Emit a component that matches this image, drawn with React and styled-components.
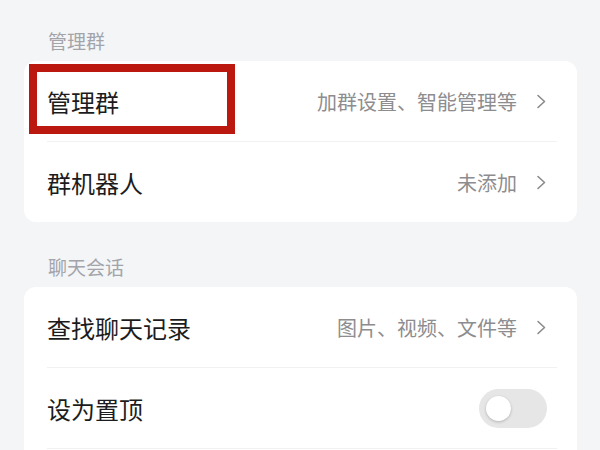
import React from "react";
import styled, { createGlobalStyle } from "styled-components";

const Global = createGlobalStyle`
  html, body { margin: 0; padding: 0; background: #f4f5f7; }
  body { font-family: "Noto Sans CJK SC", "Noto Sans", sans-serif; }
`;

const Page = styled.div`
  width: 600px;
  height: 450px;
  overflow: hidden;
  box-sizing: border-box;
  padding: 21px 23px 0 24px;
  display: flex;
  flex-direction: column;
  gap: 25px;
  background: #f4f5f7;
`;

const Section = styled.section`
  display: flex;
  flex-direction: column;
`;

const SectionTitle = styled.div`
  height: 40px;
  line-height: 40px;
  padding-left: 24px;
  font-size: 19px;
  color: #a3a4aa;
`;

const Card = styled.div`
  background: #ffffff;
  border-radius: 12px;
  display: flex;
  flex-direction: column;
`;

const Row = styled.div`
  position: relative;
  height: 80px;
  margin: 0 20px 0 23px;
  padding-right: 10px;
  display: flex;
  align-items: center;
  border-bottom: ${(p) => (p.$last ? "none" : "1px solid #f1f1f3")};
`;

const Label = styled.span`
  font-size: 24px;
  color: #1c1c20;
  flex: 1;
  white-space: nowrap;
`;

const Value = styled.span`
  font-size: 20px;
  color: #8d8d8f;
  margin-right: 19px;
  white-space: nowrap;
`;

const Highlight = styled.div`
  position: absolute;
  left: -18px;
  top: 3px;
  width: 206px;
  height: 70px;
  box-sizing: border-box;
  border: 8px solid #bb1810;
  pointer-events: none;
`;

const Track = styled.div`
  width: 68px;
  height: 39px;
  border-radius: 20px;
  background: #e6e6e6;
  display: flex;
  align-items: center;
  padding-left: 7px;
  box-sizing: border-box;
`;

const Knob = styled.div`
  width: 25px;
  height: 25px;
  border-radius: 50%;
  background: #ffffff;
  box-shadow: 0 1px 3px rgba(0, 0, 0, 0.22);
`;

const Chevron = () => (
  <svg width="11" height="15" viewBox="0 0 11 15" fill="none">
    <path d="M2 1.5 L8.5 7.5 L2 13.5" stroke="#8a8a8c" strokeWidth="1.6" strokeLinecap="round" strokeLinejoin="round" />
  </svg>
);

export default function App() {
  return (
    <>
      <Global />
      <Page>
        <Section>
          <SectionTitle>管理群</SectionTitle>
          <Card>
            <Row>
              <Highlight />
              <Label>管理群</Label>
              <Value>加群设置、智能管理等</Value>
              <Chevron />
            </Row>
            <Row $last>
              <Label>群机器人</Label>
              <Value>未添加</Value>
              <Chevron />
            </Row>
          </Card>
        </Section>
        <Section>
          <SectionTitle>聊天会话</SectionTitle>
          <Card>
            <Row>
              <Label>查找聊天记录</Label>
              <Value>图片、视频、文件等</Value>
              <Chevron />
            </Row>
            <Row>
              <Label>设为置顶</Label>
              <Track>
                <Knob />
              </Track>
            </Row>
            <Row $last />
          </Card>
        </Section>
      </Page>
    </>
  );
}
